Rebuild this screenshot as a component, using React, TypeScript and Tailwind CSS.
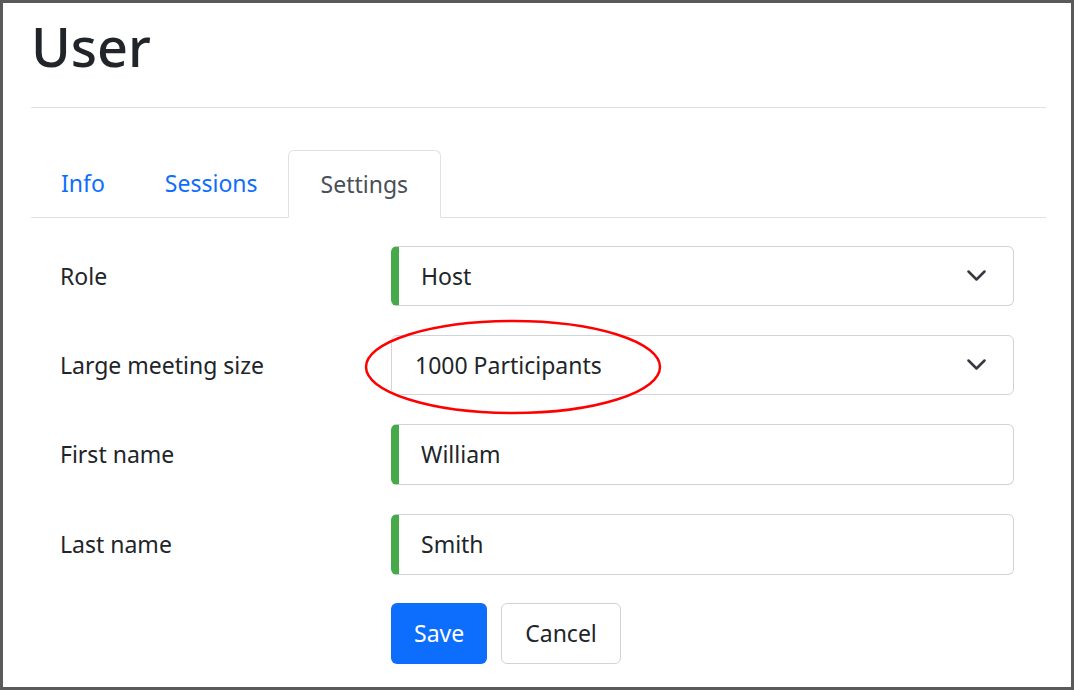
const font = { fontFamily: '"Noto Sans", "Open Sans", sans-serif' };

function Chevron() {
  return (
    <svg width="19" height="11" viewBox="0 0 19 11" className="text-[#343a40]">
      <polyline points="1.5,1.5 9.5,9.5 17.5,1.5" fill="none" stroke="currentColor" strokeWidth="2.5" strokeLinecap="round" strokeLinejoin="round" />
    </svg>
  );
}

function SelectBox({ value, marked }: { value: string; marked?: boolean }) {
  return (
    <div
      className={
        'flex h-[60px] w-[623px] items-center justify-between rounded-[6px] border border-[#ced4da] pr-[27px] ' +
        (marked ? 'border-l-[8px] border-l-[#46a94a] pl-[22px]' : 'pl-[23px]')
      }
    >
      <span className="text-[23px] text-[#212529]">{value}</span>
      <Chevron />
    </div>
  );
}

function TextBox({ value }: { value: string }) {
  return (
    <div className="flex h-[61px] w-[623px] items-center rounded-[6px] border border-[#ced4da] border-l-[8px] border-l-[#46a94a] pl-[22px]">
      <span className="text-[23px] text-[#212529]">{value}</span>
    </div>
  );
}

function Row({ label, children }: { label: string; children: React.ReactNode }) {
  return (
    <div className="flex items-center">
      <div className="w-[360px] pl-[29px] text-[23px] text-[#212529]">{label}</div>
      {children}
    </div>
  );
}

export default function App() {
  return (
    <div className="relative h-[690px] w-[1074px] overflow-hidden border-[3px] border-[#5a5a5a] bg-white" style={font}>
      <div className="pl-[28px] pr-[25px]">
        <h1 className="mt-[11px] text-[54px] font-medium leading-[1.2] text-[#212529]">User</h1>
        <div className="mt-[28px] border-t border-[#dee2e6]" />

        <div className="mt-[42px] flex border-b border-[#dee2e6] pl-[1px]">
          <div className="flex h-[67px] items-center px-[29px] text-[23px] text-[#0d6efd]">Info</div>
          <div className="ml-[2px] flex h-[67px] items-center px-[29px] text-[23px] text-[#0d6efd]">Sessions</div>
          <div className="-mb-px ml-[1px] flex h-[68px] items-center rounded-t-[6px] border border-b-white border-[#dee2e6] px-[32px] text-[23px] text-[#495057]">
            Settings
          </div>
        </div>

        <div className="mt-[28px] flex flex-col gap-[29px]">
          <Row label="Role">
            <SelectBox value="Host" marked />
          </Row>
          <Row label="Large meeting size">
            <SelectBox value="1000 Participants" />
          </Row>
          <Row label="First name">
            <TextBox value="William" />
          </Row>
          <Row label="Last name">
            <TextBox value="Smith" />
          </Row>
          <div className="-mt-px flex gap-[14px] pl-[360px]">
            <button className="h-[61px] rounded-[6px] bg-[#0d6efd] px-[23px] text-[23px] text-white">Save</button>
            <button className="h-[61px] rounded-[6px] border border-[#ced4da] bg-white px-[23px] text-[23px] text-[#212529]">
              Cancel
            </button>
          </div>
        </div>
      </div>

      <svg className="pointer-events-none absolute left-[360px] top-[314px]" width="302" height="100" viewBox="0 0 302 100">
        <ellipse cx="150" cy="50" rx="147" ry="46" fill="none" stroke="#ff0000" strokeWidth="2.5" />
      </svg>
    </div>
  );
}
